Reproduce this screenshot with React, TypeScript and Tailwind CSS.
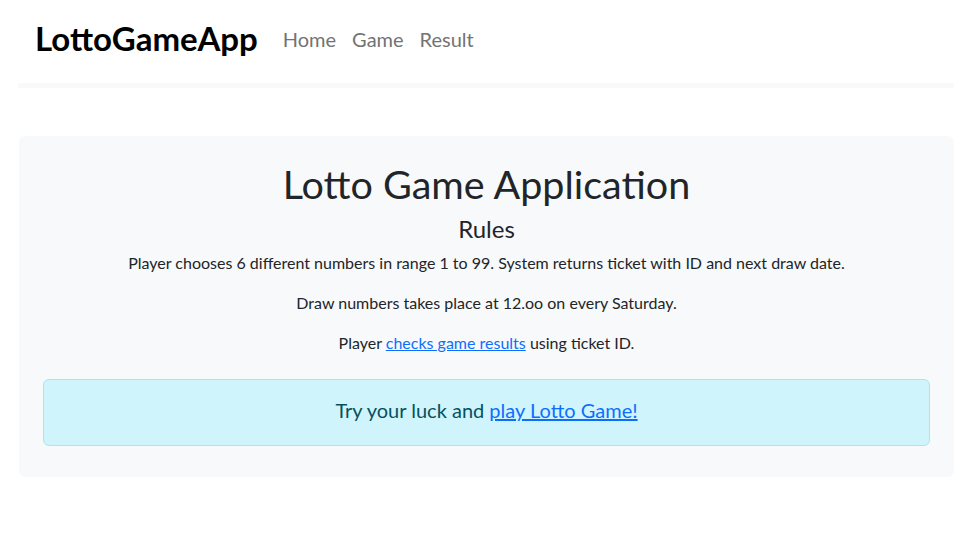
import React from "react";

export default function App() {
  return (
    <div className="min-h-screen bg-white text-[#212529]" style={{ fontFamily: "Lato, 'Open Sans', sans-serif" }}>
      <div className="px-[18px]">
        <nav className="flex h-[83px] items-center pb-[6px] pl-[17px]">
          <a href="#" className="text-[33px] font-bold leading-none text-black tracking-[0px]">LottoGameApp</a>
          <div className="ml-[25px] flex items-center gap-[16px] text-[20px] text-[#737373]">
            <a href="#">Home</a>
            <a href="#">Game</a>
            <a href="#">Result</a>
          </div>
        </nav>
        <div className="h-[5px] bg-[#f8f9fa]" />
        <div className="mt-[48px] ml-px rounded-md bg-[#f8f9fa] px-6 pt-6 pb-[31px] text-center">
          <h1 className="mb-[6px] text-[39.5px] leading-[48px] font-normal">Lotto Game Application</h1>
          <h4 className="mb-2 text-[24px] leading-[29px]">Rules</h4>
          <p className="mb-4 text-[16px] leading-6">Player chooses 6 different numbers in range 1 to 99. System returns ticket with ID and next draw date.</p>
          <p className="mb-4 text-[16px] leading-6">Draw numbers takes place at 12.oo on every Saturday.</p>
          <p className="mb-[24px] text-[16px] leading-6">
            Player <a href="#" className="text-[#0d6efd] underline">checks game results</a> using ticket ID.
          </p>
          <div className="rounded-md border border-[#9eeaf9] bg-[#cff4fc] pt-[14px] pb-[19px] text-[20px] leading-[32px] text-[#055160]">
            Try your luck and <a href="#" className="text-[#0d6efd] underline">play Lotto Game!</a>
          </div>
        </div>
      </div>
    </div>
  );
}
